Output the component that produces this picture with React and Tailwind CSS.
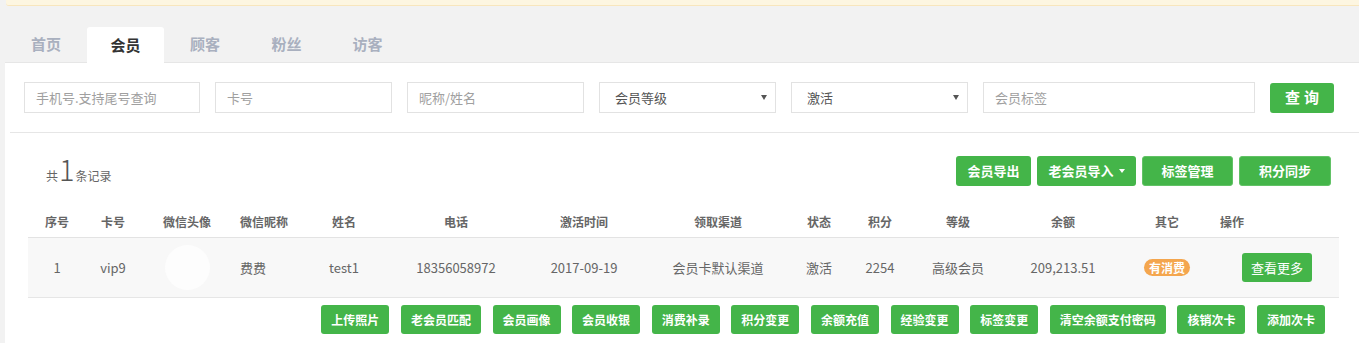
import React from "react";

const GREEN = "bg-[#44b549]";

const tabs = ["首页", "会员", "顾客", "粉丝", "访客"];
const tabWidths = ["w-[82px]", "w-[77px]", "w-[82px]", "w-[81px]", "w-[81px]"];

// column widths keep the header/cell centres where the reference has them
const cols = [
  { label: "序号", w: "w-[58px]" },
  { label: "卡号", w: "w-[54px]" },
  { label: "微信头像", w: "w-[94px]" },
  { label: "微信昵称", w: "w-[62px]", left: true },
  { label: "姓名", w: "w-[96px]" },
  { label: "电话", w: "w-[128px]" },
  { label: "激活时间", w: "w-[128px]" },
  { label: "领取渠道", w: "w-[140px]" },
  { label: "状态", w: "w-[62px]" },
  { label: "积分", w: "w-[60px]" },
  { label: "等级", w: "w-[96px]" },
  { label: "余额", w: "w-[114px]" },
  { label: "其它", w: "w-[94px]" },
  { label: "操作", w: "w-[125px]", left: true },
];

const actions = [
  "上传照片",
  "老会员匹配",
  "会员画像",
  "会员收银",
  "消费补录",
  "积分变更",
  "余额充值",
  "经验变更",
  "标签变更",
  "清空余额支付密码",
  "核销次卡",
  "添加次卡",
];

const Field = ({ placeholder, w = "w-[177px]" }) => (
  <div
    className={`${w} h-[31px] border border-[#e2e2e2] bg-white flex items-center px-[11px] text-[13px] text-[#a0a0a0]`}
  >
    {placeholder}
  </div>
);

const Select = ({ value }) => (
  <div className="w-[177px] h-[31px] border border-[#e2e2e2] bg-white flex items-center justify-between pl-[15px] pr-[8px] text-[13px] text-[#555]">
    <span>{value}</span>
    <span className="inline-block w-0 h-0 border-l-[3px] border-r-[3px] border-t-[5px] border-l-transparent border-r-transparent border-t-[#555]" />
  </div>
);

export default function App() {
  return (
    <div
      className="w-[1359px] h-[343px] bg-[#f2f2f2] overflow-hidden relative"
      style={{ fontFamily: '"Noto Sans CJK SC", "Noto Sans", sans-serif' }}
    >
      {/* notice strip */}
      <div className="ml-[6px] h-[6px] bg-[#fdf6e1] border-b border-[#f8e6bd] rounded-bl-[3px]" />

      {/* tabs */}
      <div className="flex ml-[5px] mt-[21px] h-[35px]">
        {tabs.map((t, i) => (
          <div
            key={t}
            className={`${tabWidths[i]} flex items-center justify-center text-[15px] font-bold ${
              i === 1
                ? "bg-white text-[#333] rounded-t-[3px] relative z-10 -mb-px"
                : "text-[#a9b0bf]"
            }`}
          >
            {t}
          </div>
        ))}
      </div>

      {/* panel */}
      <div className="ml-[5px] bg-white border-t border-[#e6e6e6] h-[282px]">
        <div className="flex items-center pl-[19px] pt-[19px] gap-[15px]">
          <Field placeholder="手机号.支持尾号查询" w="w-[176px]" />
          <Field placeholder="卡号" />
          <Field placeholder="昵称/姓名" />
          <Select value="会员等级" />
          <Select value="激活" />
          <Field placeholder="会员标签" w="w-[272px]" />
          <button
            className={`${GREEN} w-[64px] h-[30px] rounded-[3px] text-white text-[15px] font-bold tracking-[4px] pl-[4px]`}
          >
            查询
          </button>
        </div>

        <div className="ml-[5px] mt-[19px] border-t border-[#e6e6e6]" />

        <div className="flex items-end justify-between pl-[41px] pr-[28px] mt-[21px]">
          <div className="flex items-baseline text-[#666] pb-[1px]">
            <span className="text-[12px]">共</span>
            <span className="text-[29px] font-light leading-none mx-[1px] text-[#555]">1</span>
            <span className="text-[12px]">条记录</span>
          </div>
          <div className="flex gap-[6px]">
            <button className={`${GREEN} h-[30px] w-[75px] rounded-[3px] text-white text-[13px] font-bold`}>
              会员导出
            </button>
            <button
              className={`${GREEN} h-[30px] w-[99px] rounded-[3px] text-white text-[13px] font-bold flex items-center justify-center gap-[5px]`}
            >
              老会员导入
              <span className="inline-block w-0 h-0 border-l-[3px] border-r-[3px] border-t-[4px] border-l-transparent border-r-transparent border-t-white" />
            </button>
            <button
              className={`${GREEN} h-[30px] w-[91px] rounded-[3px] text-white text-[13px] font-bold border border-[#62c266]`}
            >
              标签管理
            </button>
            <button
              className={`${GREEN} h-[30px] w-[92px] rounded-[3px] text-white text-[13px] font-bold border border-[#62c266]`}
            >
              积分同步
            </button>
          </div>
        </div>

        {/* table */}
        <div className="ml-[23px] w-[1311px] mt-[20px]">
          <div className="flex h-[32px] items-center border-b border-[#e3e3e3] text-[12px] font-bold text-[#666]">
            {cols.map((c) => (
              <div key={c.label} className={`${c.w} ${c.left ? "pl-[6px]" : "text-center"}`}>
                {c.label}
              </div>
            ))}
          </div>
          <div className="flex h-[60px] items-center bg-[#f8f8f8] border-b border-[#e6e6e6] text-[13px] text-[#666]">
            <div className="w-[58px] text-center">1</div>
            <div className="w-[54px] text-center">vip9</div>
            <div className="w-[94px] flex justify-center">
              <div className="w-[45px] h-[45px] rounded-full bg-[#fdfdfd]" />
            </div>
            <div className="w-[62px] pl-[6px]">费费</div>
            <div className="w-[96px] text-center">test1</div>
            <div className="w-[128px] text-center">18356058972</div>
            <div className="w-[128px] text-center">2017-09-19</div>
            <div className="w-[140px] text-center">会员卡默认渠道</div>
            <div className="w-[62px] text-center">激活</div>
            <div className="w-[60px] text-center">2254</div>
            <div className="w-[96px] text-center">高级会员</div>
            <div className="w-[114px] text-center">209,213.51</div>
            <div className="w-[94px] flex justify-center">
              <span className="bg-[#f4a64e] text-white text-[12px] font-bold leading-[17px] px-[5px] rounded-full">
                有消费
              </span>
            </div>
            <div className="w-[125px] pl-[28px]">
              <button className={`${GREEN} h-[29px] w-[70px] rounded-[3px] text-white text-[13px]`}>
                查看更多
              </button>
            </div>
          </div>
          <div className="flex justify-end gap-[11.6px] pr-[14px] mt-[7px]">
            {actions.map((a) => (
              <button
                key={a}
                className={`${GREEN} h-[29px] px-[10px] rounded-[3px] text-white text-[12px] font-bold whitespace-nowrap`}
              >
                {a}
              </button>
            ))}
          </div>
        </div>
      </div>
    </div>
  );
}
